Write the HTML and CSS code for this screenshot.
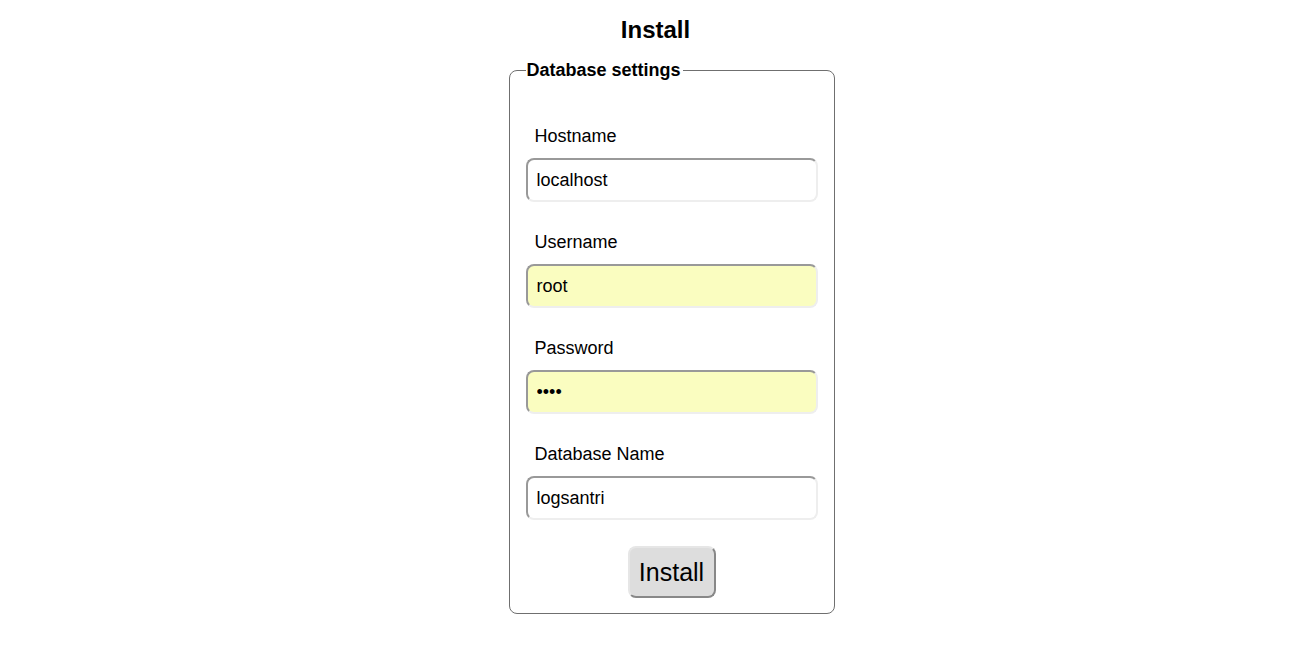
FILE: index.html
```html
<!DOCTYPE html>
<html>
<head>
<meta charset="utf-8">
<title>Install</title>
<link rel="stylesheet" href="styles.css">
</head>
<body>
<h1 class="title">Install</h1>
<form class="install-form">
  <fieldset class="settings">
    <legend class="settings-legend">Database settings</legend>
    <div class="field">
      <label class="field-label" for="host">Hostname</label>
      <input class="field-input" id="host" type="text" value="localhost">
    </div>
    <div class="field">
      <label class="field-label" for="user">Username</label>
      <input class="field-input field-input--filled" id="user" type="text" value="root">
    </div>
    <div class="field">
      <label class="field-label" for="pass">Password</label>
      <input class="field-input field-input--filled" id="pass" type="password" value="root">
    </div>
    <div class="field">
      <label class="field-label" for="db">Database Name</label>
      <input class="field-input" id="db" type="text" value="logsantri">
    </div>
    <div class="actions">
      <button class="submit" type="button">Install</button>
    </div>
  </fieldset>
</form>
</body>
</html>
```
FILE: styles.css
```css
html, body {
  margin: 0;
  padding: 0;
  background: #fff;
  color: #000;
  font-family: "Liberation Sans", Arial, sans-serif;
}

.title {
  margin: 16px 0 0;
  font-size: 24px;
  font-weight: bold;
  text-align: center;
  line-height: normal;
}

.install-form {
  display: flex;
  justify-content: center;
  margin-top: 16px;
}

.settings {
  box-sizing: border-box;
  width: 326px;
  margin: 0 0 0 32px;
  padding: 0 16px 15px;
  border: 1px solid #6f6f6f;
  border-radius: 8px;
}

.settings-legend {
  padding: 0 2px 0 1px;
  margin-left: 0;
  font-size: 18px;
  font-weight: bold;
  line-height: normal;
}

.field {
  display: flex;
  flex-direction: column;
  margin-top: 30px;
}

.field:first-of-type {
  margin-top: 45px;
}

.field-label {
  padding-left: 9px;
  font-size: 18px;
  line-height: 21px;
  margin-bottom: 11px;
}

.field-input {
  box-sizing: border-box;
  width: 292px;
  height: 44px;
  padding: 0 9px;
  font-family: "Liberation Sans", Arial, sans-serif;
  font-size: 18px;
  color: #000;
  background: #fff;
  border: 2px solid;
  border-color: #999 #eee #eee #999;
  border-radius: 8px;
  outline: none;
}

.field-input--filled {
  background: #fafdc0;
}

.actions {
  display: flex;
  justify-content: center;
  margin-top: 26px;
}

.submit {
  box-sizing: border-box;
  width: 88px;
  height: 52px;
  padding: 0;
  font-family: "Liberation Sans", Arial, sans-serif;
  font-size: 25px;
  color: #000;
  background: #dddddd;
  border: 2px solid;
  border-color: #e6e6e6 #888 #888 #e6e6e6;
  border-radius: 8px;
}
```
